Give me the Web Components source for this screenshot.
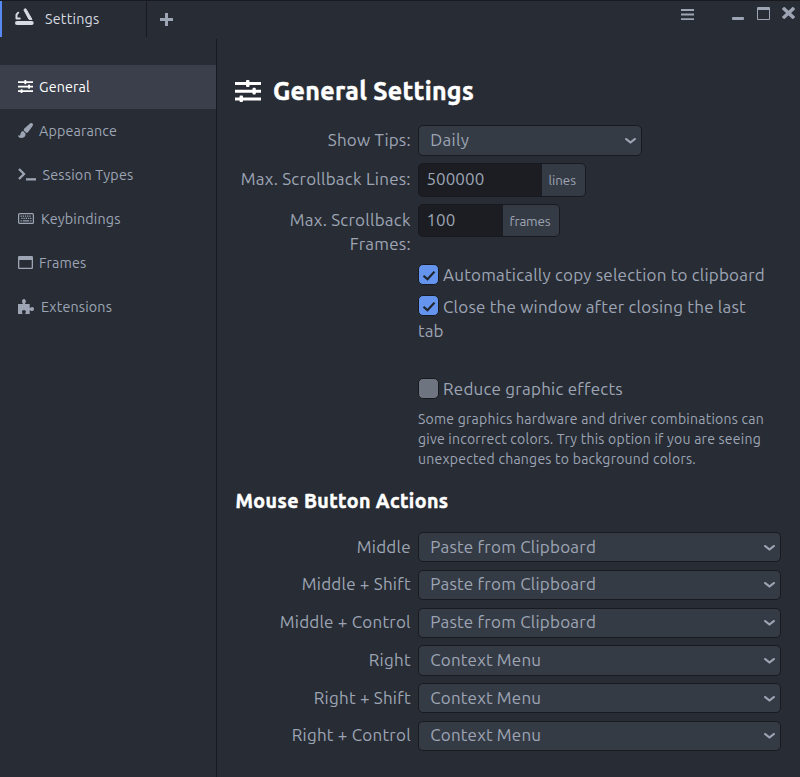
<!DOCTYPE html>
<html lang="en"><head><meta charset="utf-8"><title>Settings</title>
<style>
html,body{margin:0;height:100%;background:#282c34;overflow:hidden}
body{font-family:Ubuntu,"Noto Sans",sans-serif;font-size:17px;line-height:24px;color:#9da5b4}
</style></head><body>
<settings-window></settings-window>
<script>
const define=(name,html,setup)=>{
  customElements.define(name,class extends HTMLElement{
    connectedCallback(){
      if(this.shadowRoot)return;
      const root=this.attachShadow({mode:'open'});
      root.innerHTML=typeof html==='function'?html(this):html;
      if(setup)setup(this,root);
    }
  });
};

const icons={
  logo:['0 0 20 18',`<rect x="0" y="13" width="18.700" height="4" rx="2" fill="currentColor"/><path d="M9.200 1.200L10.800.800 17 11.400H14L9.200 2.500z" fill="currentColor" stroke="currentColor" stroke-width="1" stroke-linejoin="round"/><path d="M3.200 4.700L1.500 6.600V10.400H4.800" fill="none" stroke="currentColor" stroke-width="2" stroke-linecap="round" stroke-linejoin="round"/>`],
  plus:['0 0 13 13',`<path d="M5 0h3v5h5v3H8v5H5V8H0V5h5z" fill="currentColor"/>`],
  menu:['0 0 13 11',`<path d="M0 0h13v2H0zM0 4.6h13v2H0zM0 9.2h13v2H0z" fill="currentColor"/>`],
  min:['0 0 12 3',`<rect width="12" height="3" rx="1" fill="currentColor"/>`],
  max:['0 0 13 13',`<path d="M1 0h11a1 1 0 0 1 1 1v11a1 1 0 0 1-1 1H1a1 1 0 0 1-1-1V1a1 1 0 0 1 1-1zM1 3v9h11V3z" fill="currentColor" fill-rule="evenodd"/>`],
  close:['0 0 12 12',`<path d="M2 2l8 8M10 2l-8 8" stroke="currentColor" stroke-width="3.3" stroke-linecap="square"/>`],
  sliders:['0 0 26 22',`<path d="M0 2h11V1.2Q11 0 12 0h1.500q1 0 1 1.200V2H26v3H14.500v.8q0 1.200-1 1.200H12q-1 0-1-1.200V5H0zM0 9.700h17.500v-.8q0-1.100 1-1.100h1.300q1 0 1 1.100v.8H26v3h-5.200v.8q0 1.100-1 1.100h-1.300q-1 0-1-1.100v-.8H0zM0 17.500h4.500v-.8q0-1.200 1-1.200H7q1 0 1 1.200v.8h18v3H8v.3Q8 22 7 22H5.500q-1 0-1-1.200v-.3H0z" fill="currentColor"/>`],
  brush:['0 0 15 15',`<path d="M14.500.4c.8.7.5 1.700.1 2.500L10 9.300 8.300 10 5.600 7.300l.5-1.500L12 .5c.8-.6 1.800-.8 2.500-.1zM5 8l2.500 2.600c.3 3-1.600 4.400-4.200 4.400C1.300 15 .2 13.900 0 12.200l1.500.5c.9-.3.800-1.600 1.400-3C3.400 8.700 4.200 8.200 5 8z" fill="currentColor"/>`],
  terminal:['0 0 18 13',`<path d="M1 1l5 5-5 5" fill="none" stroke="currentColor" stroke-width="2.300"/><path d="M8 10.200h10v2.300H8z" fill="currentColor"/>`],
  keyboard:['0 0 16 11',`<rect x=".6" y=".6" width="14.800" height="9.800" rx="1" fill="none" stroke="currentColor" stroke-width="1.200"/><path d="M2.500 3.100h11M3.300 5.400h10.400" stroke="currentColor" stroke-width="1.300" stroke-dasharray="1.300 .9"/><path d="M2.500 7.900h1.300m1 0h6.400m1 0h1.300" stroke="currentColor" stroke-width="1.300"/>`],
  frame:['0 0 15 13',`<path d="M1.300 0h12.400A1.300 1.300 0 0 1 15 1.300v10.400a1.300 1.300 0 0 1-1.300 1.300H1.300A1.300 1.300 0 0 1 0 11.700V1.300A1.300 1.300 0 0 1 1.300 0zM1.300 4v7.700h12.400V4z" fill="currentColor" fill-rule="evenodd"/>`],
  puzzle:['0 0 16 15',`<path d="M0 5h4.700c.4-.6-.7-1.200-.7-2.700C4 1 4.800 0 5.900 0s2 1 2 2.300C7.900 3.800 6.700 4.400 7.100 5h4.600v3.800c.5.500 1.100-.7 2.400-.7 1.200 0 1.900.9 1.900 2s-.7 2-1.900 2c-1.300 0-1.900-1.100-2.400-.7V15H7.400c-.5-.5.500-1 .5-2.200 0-1.100-.9-1.800-2-1.800s-2 .7-2 1.800c0 1.200 1 1.700.5 2.200H0z" fill="currentColor"/>`],
  chevron:['0 0 10 6',`<path d="M1 1l4 3.600L9 1" fill="none" stroke="currentColor" stroke-width="2" stroke-linecap="round" stroke-linejoin="round"/>`],
  check:['0 0 14 12',`<path d="M1.500 6.200L5.500 10 12.500 1.800" fill="none" stroke="currentColor" stroke-width="2.200"/>`]
};
define('ui-icon',el=>{
  const [box,art]=icons[el.getAttribute('name')];
  return `<style>:host{display:inline-block;flex:none;width:${el.getAttribute('w')}px;height:${el.getAttribute('h')}px}svg{display:block;width:100%;height:100%}</style><svg viewBox="${box}" preserveAspectRatio="none">${art}</svg>`;
});

/* A line of text whose tracking is adjusted so that it fills the given width. */
define('fit-text',`<style>:host{display:inline-block;white-space:nowrap}span{display:inline-block}</style><span><slot></slot></span>`,(el,root)=>{
  const w=+el.getAttribute('w');
  if(!w)return;
  const span=root.querySelector('span');
  const gap=(w-span.getBoundingClientRect().width)/el.textContent.length;
  span.style.letterSpacing=gap.toFixed(4)+'px';
});

define('title-bar',`<style>
:host{display:flex;height:38px;box-sizing:border-box;border-top:1px solid #181a1f;justify-content:space-between}
.tab{width:147px;height:36px;box-sizing:border-box;border-left:2px solid #568af2;border-right:1px solid #181a1f;display:flex;align-items:center;padding-left:13px;color:#d7dae0;font-size:14.300px}
.tab ui-icon{margin-top:-4px;margin-right:10px}
.left{display:flex}.add{padding:12px 0 0 12.500px}
.win{display:flex;align-items:flex-start}
</style><div class="left"><div class="tab"><ui-icon name="logo" w="20" h="18"></ui-icon><fit-text w="54.500">Settings</fit-text></div><ui-icon class="add" name="plus" w="13" h="13"></ui-icon></div>
<div class="win"><ui-icon name="menu" w="13" h="11" style="margin:8px 38px 0 0"></ui-icon><ui-icon name="min" w="12" h="3" style="margin:16px 13px 0 0"></ui-icon><ui-icon name="max" w="13" h="13" style="margin:6px 12px 0 0"></ui-icon><ui-icon name="close" w="13" h="12" style="margin:5.500px 5px 0 0"></ui-icon></div>`);

define('nav-item',`<style>:host{display:flex;align-items:center;height:44px;padding-left:18px;box-sizing:border-box;font-size:14.300px}:host([active]){background:#3a3f4b;color:#fff}</style><slot></slot>`);
define('side-nav',()=>{
  const rows=[['General','sliders',15,13,6,51],['Appearance','brush',15,15,6,78],['Session Types','terminal',18,13,6.5,91],['Keybindings','keyboard',16,11,7,79.5],['Frames','frame',15,13,6,47.5],['Extensions','puzzle',16,15,7,71]];
  return `<style>:host{display:block;width:216px;border-right:1px solid #181a1f;padding-top:26px;margin-top:1px}nav-item ui-icon{position:relative;top:-1px}</style>`+rows.map(([t,i,w,h,g,tw],n)=>`<nav-item ${n?'':'active'}><ui-icon name="${i}" w="${w}" h="${h}" style="margin-right:${g}px"></ui-icon><fit-text w="${tw}">${t}</fit-text></nav-item>`).join('');
});

define('setting-row',el=>`<style>
:host{display:grid;grid-template-columns:175.800px 1fr;column-gap:7.200px;align-items:start;height:${el.getAttribute('h')}px}
.label{text-align:right;padding-top:${el.getAttribute('pad')||3}px}
</style><div class="label"><slot name="label"></slot></div><div><slot></slot></div>`);

define('select-box',el=>`<style>
:host{display:flex;box-sizing:border-box;width:${el.getAttribute('w')}px;height:${el.getAttribute('h')||30}px;border:1px solid #181a1f;border-radius:5px;background:#353b45;align-items:center;justify-content:space-between;padding:0 4.500px 1px 11.200px}
ui-icon{margin-top:2px}
</style><slot></slot><ui-icon name="chevron" w="11" h="6"></ui-icon>`);

define('number-field',el=>`<style>
:host{display:flex;box-sizing:border-box;width:${el.getAttribute('w')}px;height:${el.getAttribute('h')}px;border:1px solid #181a1f;border-radius:5px;background:#1b1d23;overflow:hidden}
.value{flex:1;padding:3px 0 0 7.400px}.unit{width:${el.getAttribute('unit')}px;background:#353b45;font-size:13.400px;padding-top:5px;box-sizing:border-box;padding-left:6.500px}
</style><div class="value"><slot></slot></div><div class="unit"><slot name="unit"></slot></div>`);

define('check-box',el=>`<style>
:host{display:flex;align-items:flex-start}
::slotted(fit-text){margin-top:${el.getAttribute('shift')||0}px}
.box{width:21px;height:21px;box-sizing:border-box;border:1px solid #181a1f;border-radius:5px;background:${el.hasAttribute('checked')?'#6494ed':'#6f7580'};color:#20242c;display:flex;align-items:center;justify-content:center;margin-right:4px}
.box ui-icon{margin:2px 0 0 2px}
</style><div class="box">${el.hasAttribute('checked')?'<ui-icon name="check" w="14" h="11"></ui-icon>':''}</div><slot></slot>`);

define('settings-page',()=>{
  const mouse=[['Middle',54,0],['Middle + Shift',109,0],['Middle + Control',131,0],['Right',42,1],['Right + Shift',97,1],['Right + Control',119,1]];
  return `<style>
:host{display:block;flex:1;padding:36px 0 0 18px}
h1,h2{margin:0;color:#fff;font-weight:700;-webkit-text-stroke:.5px #fff}
h1{display:flex;align-items:center;height:34px;font-size:25px;line-height:34px;margin-bottom:17px}
h1 ui-icon{margin:0 12px 0 0}
h2{font-size:19.600px;line-height:28px;margin-bottom:17px;height:28px;padding-left:.5px}
.note{font-size:14px;line-height:20px;padding-top:8px}
.note fit-text,.block{display:block}
</style>
<h1><ui-icon name="sliders" w="26" h="22"></ui-icon><fit-text w="201">General Settings</fit-text></h1>
<setting-row h="38"><fit-text slot="label" w="83">Show Tips:</fit-text><select-box w="224" h="31"><fit-text w="39">Daily</fit-text></select-box></setting-row>
<setting-row h="41" pad="4"><fit-text slot="label" w="170">Max. Scrollback Lines:</fit-text><number-field w="168" h="34" unit="43"><fit-text w="58">500000</fit-text><fit-text slot="unit" w="27.500">lines</fit-text></number-field></setting-row>
<setting-row h="60" pad="4"><fit-text slot="label" w="121">Max. Scrollback</fit-text><fit-text slot="label" w="61">Frames:</fit-text><number-field w="142" h="33" unit="56"><fit-text w="29">100</fit-text><fit-text slot="unit" w="41">frames</fit-text></number-field></setting-row>
<setting-row h="31"><check-box checked shift="-1"><fit-text w="322">Automatically copy selection to clipboard</fit-text></check-box></setting-row>
<setting-row h="83"><check-box checked><fit-text w="303">Close the window after closing the last</fit-text></check-box><fit-text class="block" w="25.500">tab</fit-text></setting-row>
<setting-row h="109"><check-box shift="-1"><fit-text w="180">Reduce graphic effects</fit-text></check-box><div class="note"><fit-text w="346">Some graphics hardware and driver combinations can</fit-text><fit-text w="343">give incorrect colors. Try this option if you are seeing</fit-text><fit-text w="278">unexpected changes to background colors.</fit-text></div></setting-row>
<h2><fit-text w="213">Mouse Button Actions</fit-text></h2>`+mouse.map(([t,w,c])=>`<setting-row h="37.750" pad="2.600"><fit-text slot="label" w="${w}">${t}</fit-text><select-box w="363" h="30.300"><fit-text w="${c?111:166}">${c?'Context Menu':'Paste from Clipboard'}</fit-text></select-box></setting-row>`).join('');
});

define('settings-window',`<style>:host{display:flex;flex-direction:column;height:100vh}.body{display:flex;flex:1;min-height:0}</style><title-bar></title-bar><div class="body"><side-nav></side-nav><settings-page></settings-page></div>`);
</script></body></html>
